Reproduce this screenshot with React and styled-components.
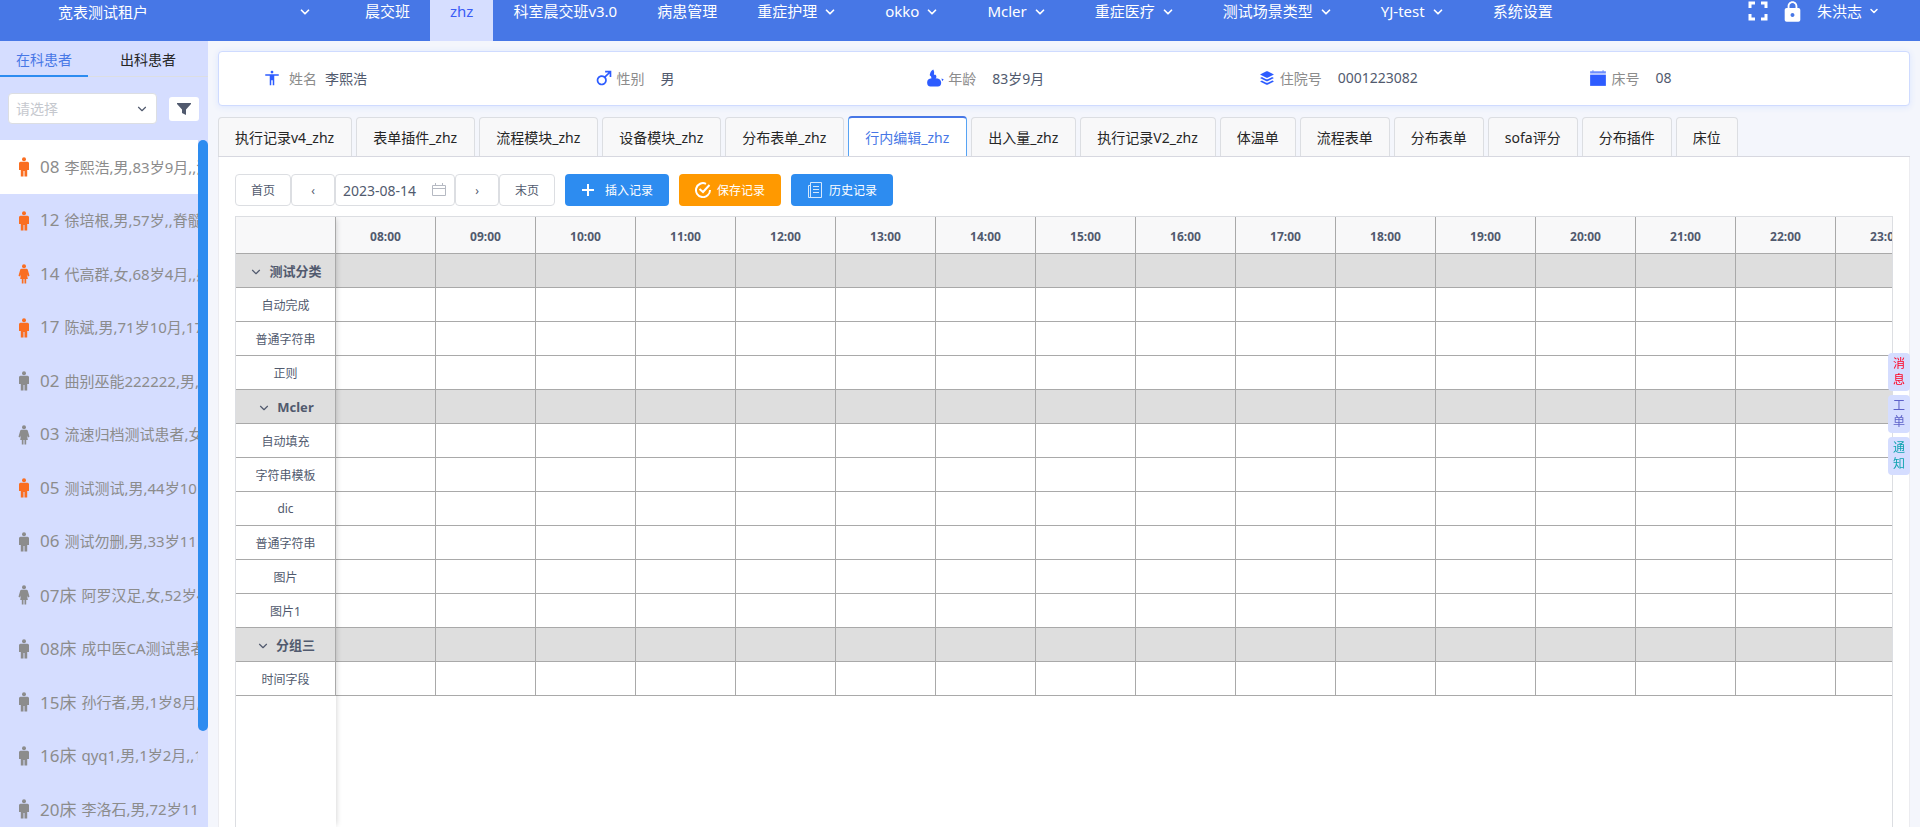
import { useState } from "react";
import styled, { createGlobalStyle, css } from "styled-components";
import { IoMdBody, IoMdMale, IoLogoBuffer, IoMdLock } from "react-icons/io";
import { ChevronDown } from "lucide-react";

const menus = [
  { name: "晨交班" },
  { name: "zhz", active: true },
  { name: "科室晨交班v3.0" },
  { name: "病患管理" },
  { name: "重症护理", children: true },
  { name: "okko", children: true },
  { name: "Mcler", children: true },
  { name: "重症医疗", children: true },
  { name: "测试场景类型", children: true },
  { name: "YJ-test", children: true },
  { name: "系统设置" },
];

const patients = [
  { bed: "08", info: "李熙浩,男,83岁9月,,流", sex: "男", critical: true },
  { bed: "12", info: "徐培根,男,57岁,,脊髓", sex: "男", critical: true },
  { bed: "14", info: "代高群,女,68岁4月,,感", sex: "女", critical: true },
  { bed: "17", info: "陈斌,男,71岁10月,17", sex: "男", critical: true },
  { bed: "02", info: "曲别巫能222222,男,", sex: "男" },
  { bed: "03", info: "流速归档测试患者,女", sex: "女" },
  { bed: "05", info: "测试测试,男,44岁10", sex: "男", critical: true },
  { bed: "06", info: "测试勿删,男,33岁11", sex: "男" },
  { bed: "07床", info: "阿罗汉足,女,52岁4", sex: "女" },
  { bed: "08床", info: "成中医CA测试患者", sex: "男" },
  { bed: "15床", info: "孙行者,男,1岁8月,", sex: "男" },
  { bed: "16床", info: "qyq1,男,1岁2月,,1", sex: "男" },
  { bed: "20床", info: "李洛石,男,72岁11", sex: "男" },
];

const formTabs = [
  "执行记录v4_zhz",
  "表单插件_zhz",
  "流程模块_zhz",
  "设备模块_zhz",
  "分布表单_zhz",
  "行内编辑_zhz",
  "出入量_zhz",
  "执行记录V2_zhz",
  "体温单",
  "流程表单",
  "分布表单",
  "sofa评分",
  "分布插件",
  "床位",
];

const hours = Array.from(
  { length: 16 },
  (_, i) => `${String(i + 8).padStart(2, "0")}:00`
);

const rows = [
  { name: "测试分类", group: true },
  { name: "自动完成" },
  { name: "普通字符串" },
  { name: "正则" },
  { name: "Mcler", group: true },
  { name: "自动填充" },
  { name: "字符串模板" },
  { name: "dic" },
  { name: "普通字符串" },
  { name: "图片" },
  { name: "图片1" },
  { name: "分组三", group: true },
  { name: "时间字段" },
];

const ManIcon = () => (
  <svg width="24" height="24" viewBox="0 0 24 24" fill="currentColor">
    <circle cx="12" cy="4.2" r="2" />
    <path d="M8.500 6.800h7q1.500 0 1.500 1.500V15h-1.800v6.500h-2.700V16h-1v5.500H8.800V15H7V8.300q0-1.500 1.500-1.500z" />
  </svg>
);

const WomanIcon = () => (
  <svg width="24" height="24" viewBox="0 0 24 24" fill="currentColor">
    <circle cx="12" cy="4.2" r="2" />
    <path d="M9.500 6.800h5q1 0 1.300 1l1.700 6-1.500.7-1-2 .8 4.500h-1.600v4.500h-1.700V17h-1v4.500H9.800V17H8.200l.8-4.500-1 2-1.500-.7 1.700-6q.3-1 1.300-1z" />
  </svg>
);

const FullscreenIcon = () => (
  <svg width="20" height="20" viewBox="0 0 20 20" fill="none" stroke="currentColor" strokeWidth="3">
    <path d="M2 7V2h5M13 2h5v5M18 13v5h-5M7 18H2v-5" />
  </svg>
);

const AgeIcon = () => (
  <svg width="16" height="16" viewBox="0 0 16 16" fill="currentColor">
    <path d="M6.500 0.500q-3 1.500-3 5l3.500 0q1-2.500-.5-5z" />
    <path d="M3 5.200h5.500q1.500 1.500 0 3.800H5q0-2.500-2-3.800z" />
    <path d="M1 12q0-3.500 4-3.800 2 1.500 4.500 0 3.500.3 4 3.800 0 3.500-3 3.500H4q-3 0-3-3.500z" />
    <path d="M13.700 8.500l2 .5-1.200 1.800z" />
  </svg>
);

const BedIcon = () => (
  <svg width="16" height="16" viewBox="0 0 16 16" fill="currentColor">
    <path d="M1 2h2V1h1v1h8V1h1v1h2v2H1z" opacity="0.7" />
    <path d="M1 5h14v10H1z" />
  </svg>
);

const FunnelIcon = () => (
  <svg width="14" height="14" viewBox="0 0 14 14" fill="currentColor">
    <path d="M0 1h14v1L9 7.500V13L5 11V7.500L0 2z" />
  </svg>
);

const CalendarIcon = () => (
  <svg width="14" height="14" viewBox="0 0 14 14" fill="none" stroke="currentColor">
    <path d="M.5 2.500h13v10H.5zM.5 5.500h13M3.500 0v3M10.500 0v3" />
  </svg>
);

const PlusIcon = () => (
  <svg width="14" height="14" viewBox="0 0 14 14" stroke="currentColor" strokeWidth="2">
    <path d="M1 7h12M7 1v12" />
  </svg>
);

const SaveIcon = () => (
  <svg width="16" height="16" viewBox="0 0 16 16" fill="none" stroke="currentColor" strokeWidth="2">
    <path d="M11 1.800A7 7 0 1 0 15 8" />
    <path d="M4.500 7l3.500 3 6.500-7" />
  </svg>
);

const HistoryIcon = () => (
  <svg width="16" height="16" viewBox="0 0 16 16" fill="none" stroke="currentColor" opacity="0.8">
    <path d="M3.500.5h11v15h-13v-12h2M3.500.5v15M6 4.500h6M6 7.500h6M6 10.500h6" />
  </svg>
);

const profile = [
  { label: "姓名", value: "李熙浩", icon: <IoMdBody />, wide: true },
  { label: "性别", value: "男", icon: <IoMdMale /> },
  { label: "年龄", value: "83岁9月", icon: <AgeIcon /> },
  { label: "住院号", value: "0001223082", icon: <IoLogoBuffer /> },
  { label: "床号", value: "08", icon: <BedIcon /> },
];

const App = () => {
  const [current, setCurrent] = useState(0);
  const [tab, setTab] = useState(5);
  const [date, setDate] = useState("2023-08-14");

  return (
    <Page>
      <GlobalStyle />
      <Header>
        <Tenant>
          <TenantSelect aria-label="租户">
            <option>宽表测试租户</option>
          </TenantSelect>
          <ChevronDown size={14} strokeWidth={3} />
        </Tenant>
        <Nav>
          {menus.map((menu) => (
            <NavLink
              key={menu.name}
              href="#"
              $active={menu.active}
              $children={menu.children}
            >
              {menu.name}
              {menu.children && <ChevronDown size={14} strokeWidth={3} />}
            </NavLink>
          ))}
        </Nav>
        <UserArea>
          <HeaderButton aria-label="全屏">
            <FullscreenIcon />
          </HeaderButton>
          <HeaderButton aria-label="锁屏">
            <IoMdLock size={25} />
          </HeaderButton>
          <UserButton>
            朱洪志
            <ChevronDown size={12} strokeWidth={3} />
          </UserButton>
        </UserArea>
      </Header>
      <Body>
        <Sidebar>
          <SideTabs>
            <SideTab $active>在科患者</SideTab>
            <SideTab>出科患者</SideTab>
          </SideTabs>
          <Filter>
            <FilterSelect>
              <select aria-label="筛选" defaultValue="">
                <option value="">请选择</option>
              </select>
              <ChevronDown size={14} />
            </FilterSelect>
            <FilterButton aria-label="过滤">
              <FunnelIcon />
            </FilterButton>
          </Filter>
          <PatientArea>
            <PatientList>
              {patients.map((p, index) => (
                <Patient
                  key={index}
                  $active={index === current}
                  $critical={p.critical}
                  onClick={() => setCurrent(index)}
                >
                  {p.sex === "男" ? <ManIcon /> : <WomanIcon />}
                  <PatientText>
                    <Bed>{p.bed}</Bed>
                    <span>{p.info}</span>
                  </PatientText>
                </Patient>
              ))}
            </PatientList>
            <ScrollThumb />
          </PatientArea>
        </Sidebar>
        <Main>
          <Profile>
            {profile.map((item) => (
              <ProfileItem key={item.label} $wide={item.wide}>
                {item.icon}
                <dt>{item.label}</dt>
                <dd>{item.value}</dd>
              </ProfileItem>
            ))}
          </Profile>
          <Tabs>
            {formTabs.map((name, index) => (
              <Tab
                key={index}
                $active={index === tab}
                $long={name.endsWith("_zhz")}
                onClick={() => setTab(index)}
              >
                {name}
              </Tab>
            ))}
          </Tabs>
          <Panel>
            <Toolbar>
              <Pager>
                <PageButton>首页</PageButton>
                <PageButton>‹</PageButton>
                <DateBox>
                  <input
                    aria-label="日期"
                    value={date}
                    onChange={(e) => setDate(e.target.value)}
                  />
                  <CalendarIcon />
                </DateBox>
                <PageButton>›</PageButton>
                <PageButton>末页</PageButton>
              </Pager>
              <ActionButton $gap={10}>
                <PlusIcon />
                插入记录
              </ActionButton>
              <ActionButton $color="#ff9900">
                <SaveIcon />
                保存记录
              </ActionButton>
              <ActionButton>
                <HistoryIcon />
                历史记录
              </ActionButton>
            </Toolbar>
            <TableWrap>
              <Table>
                <thead>
                  <tr>
                    <HeadCell />
                    {hours.map((hour) => (
                      <HeadCell key={hour}>{hour}</HeadCell>
                    ))}
                  </tr>
                </thead>
                <tbody>
                  {rows.map((row, index) => (
                    <Row key={index} $group={row.group}>
                      <NameCell $group={row.group}>
                        {row.group && <ChevronDown size={14} />}
                        {row.name}
                      </NameCell>
                      {hours.map((hour) => (
                        <Cell key={hour} />
                      ))}
                    </Row>
                  ))}
                </tbody>
              </Table>
            </TableWrap>
          </Panel>
        </Main>
      </Body>
      <Floats>
        <FloatButton $color="#ff0022">消息</FloatButton>
        <FloatButton $color="#5c60c8">工单</FloatButton>
        <FloatButton $color="#0fa3b1">通知</FloatButton>
      </Floats>
    </Page>
  );
};

const GlobalStyle = createGlobalStyle`
  * {
    box-sizing: border-box;
  }
  body {
    margin: 0;
    color: #515a6e;
    font-family: "Noto Sans", "Noto Sans CJK SC", sans-serif;
    font-size: 14px;
  }
  button, input, select {
    font: inherit;
    color: inherit;
  }
  button {
    cursor: pointer;
    white-space: nowrap;
  }
`;

const Page = styled.div`
  height: 100vh;
  display: flex;
  flex-direction: column;
  overflow: hidden;
  background: #f4f6fc;
`;

const Header = styled.header`
  height: 41px;
  flex: none;
  display: flex;
  padding-right: 40px;
  background: #4777e6;
  color: #fff;
  font-size: 15px;
  line-height: 22px;
`;

const Tenant = styled.div`
  width: 345px;
  height: 24px;
  display: flex;
  align-items: center;
  padding: 0 33px 0 58px;
`;

const TenantSelect = styled.select`
  flex: 1;
  padding: 0;
  border: 0;
  appearance: none;
  background: transparent;
`;

const Nav = styled.nav`
  flex: 1;
  display: flex;
  white-space: nowrap;
`;

const NavLink = styled.a`
  display: flex;
  align-items: flex-start;
  gap: 6px;
  padding: 0 ${(props) => (props.$children ? "28px" : "20px")} 0 20px;
  color: inherit;
  text-decoration: none;

  svg {
    height: 24px;
  }

  ${(props) =>
    props.$active &&
    css`
      background: #d6deff;
      color: #3a5cf5;
    `}
`;

const UserArea = styled.div`
  height: 22px;
  display: flex;
  align-items: center;
  gap: 12px;
`;

const HeaderButton = styled.button`
  display: flex;
  padding: 0;
  border: 0;
  background: none;
`;

const UserButton = styled(HeaderButton)`
  align-items: center;
  gap: 6px;
`;

const Body = styled.div`
  flex: 1;
  min-height: 0;
  display: flex;
`;

const Sidebar = styled.aside`
  width: 208px;
  flex: none;
  display: flex;
  flex-direction: column;
  background: #d5ddff;
`;

const SideTabs = styled.div`
  display: flex;
  gap: 16px;
  box-shadow: inset 0 -1px #dcdee2;
`;

const SideTab = styled.button`
  height: 36px;
  padding: 2px 16px 0;
  border: 0;
  border-bottom: 2px solid ${(props) => (props.$active ? "#2d8cf0" : "transparent")};
  background: none;
  color: ${(props) => (props.$active ? "#4777e6" : "#262626")};
`;

const Filter = styled.div`
  display: flex;
  align-items: center;
  gap: 12px;
  padding: 16px 9px 16px 8px;
`;

const FilterSelect = styled.div`
  flex: 1;
  display: flex;
  align-items: center;
  height: 31px;
  padding: 0 7px;
  border: 1px solid #dcdee2;
  border-radius: 4px;
  background: #fff;

  select {
    flex: 1;
    padding: 0;
    border: 0;
    appearance: none;
    background: transparent;
    color: #c5c8ce;
  }
`;

const FilterButton = styled.button`
  width: 30px;
  height: 24px;
  display: flex;
  align-items: center;
  justify-content: center;
  padding: 0;
  border: 0;
  border-radius: 3px;
  background: #fff;
`;

const PatientArea = styled.div`
  position: relative;
  flex: 1;
  min-height: 0;
  padding-right: 10px;
`;

const PatientList = styled.ul`
  height: 100%;
  margin: 0;
  padding: 0;
  overflow: hidden;
  list-style: none;
`;

const Patient = styled.li`
  height: 54px;
  display: flex;
  align-items: center;
  gap: 4px;
  padding-left: 12px;
  background: ${(props) => (props.$active ? "#fff" : "transparent")};
  color: #8c8c8c;
  font-size: 15px;
  white-space: nowrap;
  cursor: pointer;

  &:nth-child(even) {
    height: 53px;
  }

  svg {
    flex: none;
    color: ${(props) => (props.$critical ? "#fa6e21" : "#8c8c8c")};
  }
`;

const PatientText = styled.div`
  display: flex;
  align-items: center;
  gap: 5px;
  padding-bottom: 2px;
`;

const Bed = styled.span`
  font-size: 17px;
`;

const ScrollThumb = styled.div`
  position: absolute;
  top: 0;
  right: 0;
  width: 10px;
  height: 86%;
  border-radius: 5px;
  background: #2d8cf0;
`;

const Main = styled.main`
  flex: 1;
  min-width: 0;
  display: flex;
  flex-direction: column;
  padding: 10px 10px 0;
`;

const Profile = styled.dl`
  display: grid;
  grid-template-columns: repeat(5, 1fr);
  margin: 0 0 10px;
  padding: 0 16px;
  border: 1px solid #cfdbff;
  border-radius: 4px;
  background: #fff;
  box-shadow: 0 1px 6px #dbe5ff;
`;

const ProfileItem = styled.div`
  height: 53px;
  display: flex;
  align-items: center;
  padding: 0 0 2px 28px;

  svg {
    width: 18px;
    height: 18px;
    color: #2d5cff;
  }

  dt {
    margin-left: ${(props) => (props.$wide ? "8px" : "4px")};
    color: #8c8c8c;
  }

  dd {
    margin: 0 0 0 ${(props) => (props.$wide ? "8px" : "16px")};
  }
`;

const Tabs = styled.div`
  display: flex;
  align-items: flex-end;
  gap: 4px;
  border-bottom: 1px solid #d7d8e0;
`;

const Tab = styled.button`
  height: 39px;
  padding: 0 ${(props) => (props.$long ? "17px" : "16px")} 0 16px;
  border: 1px solid #dcdee2;
  border-bottom: 0;
  border-radius: 4px 4px 0 0;
  background: #f8f8f9;
  color: #262626;

  ${(props) =>
    props.$active &&
    css`
      height: 40px;
      border-color: #57a3f3;
      border-top: 2px solid #4777e6;
      background: #fff;
      color: #4777e6;
    `}
`;

const Panel = styled.section`
  flex: 1;
  min-height: 0;
  display: flex;
  flex-direction: column;
  padding: 17px 16px 0;
  border: 1px solid #ececf0;
  border-width: 0 1px;
  background: #fff;
`;

const Toolbar = styled.div`
  display: flex;
  gap: 10px;
  margin-bottom: 10px;
`;

const Pager = styled.div`
  display: flex;
`;

const PageButton = styled.button`
  min-width: 44px;
  height: 32px;
  padding: 0 15px;
  border: 1px solid #dcdee2;
  border-radius: 4px;
  background: #fff;
  font-size: 12px;
`;

const DateBox = styled.div`
  width: 120px;
  display: flex;
  align-items: center;
  padding: 0 8px 0 7px;
  border: 1px solid #dcdee2;
  border-radius: 4px;

  input {
    flex: 1;
    min-width: 0;
    padding: 0;
    border: 0;
    outline: 0;
  }

  svg {
    color: #b5b9c2;
  }
`;

const ActionButton = styled.button`
  height: 32px;
  display: flex;
  align-items: center;
  gap: ${(props) => props.$gap || 6}px;
  padding: 0 16px;
  border: 0;
  border-radius: 4px;
  background: ${(props) => props.$color || "#2d8cf0"};
  color: #fff;
  font-size: 12px;
`;

const TableWrap = styled.div`
  position: relative;
  flex: 1;
  min-height: 0;
  overflow: hidden;
  border: 1px solid #dcdee2;
  border-bottom: 0;

  /* shadow of the fixed first column */
  &::after {
    content: "";
    position: absolute;
    top: 0;
    bottom: 0;
    left: 0;
    width: 100px;
    box-shadow: 2px 0 6px -2px rgba(0, 0, 0, 0.2);
    pointer-events: none;
  }
`;

const Table = styled.table`
  width: 1700px;
  table-layout: fixed;
  border-collapse: separate;
  border-spacing: 0;
`;

const Cell = styled.td`
  height: 34px;
  padding: 0;
  border-right: 1px solid #a9a9a9;
  border-bottom: 1px solid #a9a9a9;
`;

const HeadCell = styled.th`
  height: 37px;
  padding: 2px 0 0;
  border-right: 1px solid #a9a9a9;
  border-bottom: 1px solid #a9a9a9;
  background: #f8f8f9;
  font-size: 12px;
`;

const Row = styled.tr`
  background: ${(props) => (props.$group ? "#dedede" : "#fff")};
`;

const NameCell = styled(Cell)`
  font-size: ${(props) => (props.$group ? "13px" : "12px")};
  font-weight: ${(props) => (props.$group ? 700 : 400)};
  text-align: center;

  svg {
    margin-right: 6px;
    vertical-align: middle;
  }
`;

const Floats = styled.div`
  position: fixed;
  top: 353px;
  right: 10px;
  display: flex;
  flex-direction: column;
  gap: 4px;
`;

const FloatButton = styled.button`
  width: 22px;
  padding: 3px 5px;
  border: 0;
  border-radius: 4px;
  background: #d5ddff;
  color: ${(props) => props.$color};
  font-size: 12px;
  line-height: 16px;
  white-space: normal;
`;

export default App;
